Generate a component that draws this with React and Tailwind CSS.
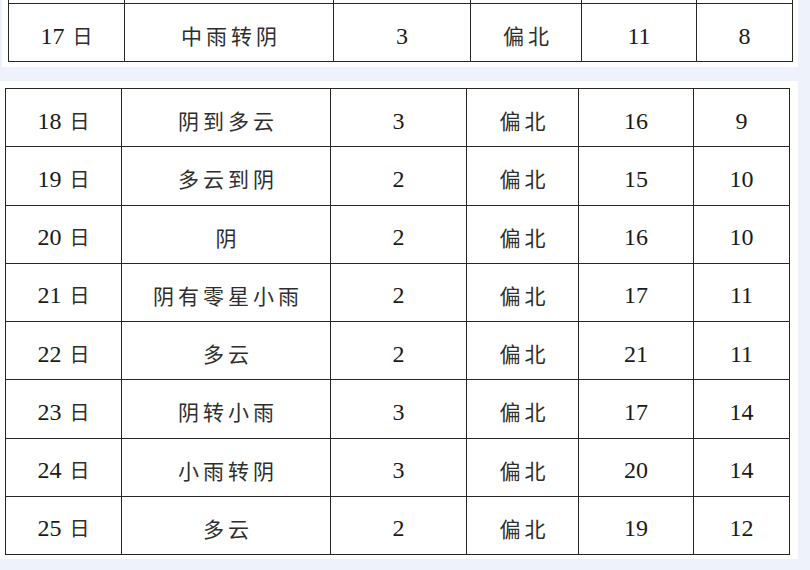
import React from "react";

const rows = [
  ["18", "阴到多云", "3", "偏北", "16", "9"],
  ["19", "多云到阴", "2", "偏北", "15", "10"],
  ["20", "阴", "2", "偏北", "16", "10"],
  ["21", "阴有零星小雨", "2", "偏北", "17", "11"],
  ["22", "多云", "2", "偏北", "21", "11"],
  ["23", "阴转小雨", "3", "偏北", "17", "14"],
  ["24", "小雨转阴", "3", "偏北", "20", "14"],
  ["25", "多云", "2", "偏北", "19", "12"],
];

const serif = { fontFamily: '"Liberation Serif", "Noto Sans CJK SC", serif' };

function Cell({ children, cjk }) {
  return (
    <div className="flex items-center justify-center border-r-[1.5px] border-b-[1.5px] border-[#262626] pt-[6px] text-[24px] leading-none text-[#1a1a1a]">
      {cjk ? (
        <span className="font-['Noto_Sans_CJK_SC',sans-serif] text-[21px] font-normal tracking-[4px] text-[#2e2e2e] pl-[4px]">
          {children}
        </span>
      ) : (
        children
      )}
    </div>
  );
}

function Row({ r }) {
  return (
    <>
      <Cell>
        {r[0] ? (
          <span>
            {r[0]}
            <span className="font-['Noto_Sans_CJK_SC',sans-serif] font-normal text-[20px] text-[#2e2e2e] ml-[8px]">日</span>
          </span>
        ) : null}
      </Cell>
      <Cell cjk>{r[1]}</Cell>
      <Cell>{r[2]}</Cell>
      <Cell cjk>{r[3]}</Cell>
      <Cell>{r[4]}</Cell>
      <Cell>{r[5]}</Cell>
    </>
  );
}

export default function App() {
  return (
    <div className="w-[810px] h-[570px] overflow-hidden bg-[#eef3fb] flex flex-col" style={serif}>
      <div className="ml-[2px] w-[796px] h-[67px] bg-white overflow-hidden pl-[6px]">
        <div className="mt-[-55px] grid grid-cols-[116px_209px_137px_111px_115px_96px] auto-rows-[58px] border-l-[1.5px] border-t-[1.5px] border-[#262626] w-[784px]">
          <Row r={["", "", "", "", "", ""]} />
          <Row r={["17", "中雨转阴", "3", "偏北", "11", "8"]} />
        </div>
      </div>
      <div className="mt-[14px] w-[798px] h-[478px] bg-white pl-[5px] pt-[7px]">
        <div className="grid grid-cols-[116px_209px_136px_112px_115px_96px] auto-rows-[58.25px] border-l-[1.5px] border-t-[1.5px] border-[#262626] w-[785px]">
          {rows.map((r) => (
            <Row key={r[0]} r={r} />
          ))}
        </div>
      </div>
    </div>
  );
}
